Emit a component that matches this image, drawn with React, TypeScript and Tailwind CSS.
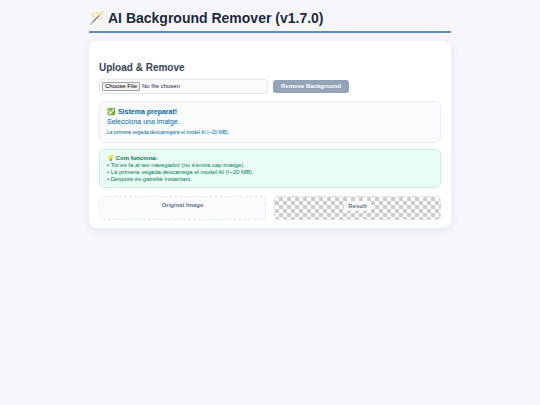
import { useState } from 'react'

const STEPS = [
  "Tot es fa al teu navegador (no s'envia cap imatge).",
  'La primera vegada descarrega el model AI (\\~20 MB).',
  'Després és gairebé instantani.',
]

export default function App() {
  const [file, setFile] = useState<File | null>(null)

  return (
    <div className="min-h-screen bg-[#f4f6fb] px-4 pt-2 font-['Liberation_Sans',Arial,sans-serif]">
      <main className="mx-auto max-w-[362px]">
        <h1 className="flex items-center gap-[3px] border-b-2 border-[#6488c8] pb-[3px] text-[14px] leading-5 font-bold text-[#1e293b]">
          <span className="text-[13px]">🪄</span>
          <span>AI Background Remover (v1.7.0)</span>
        </h1>

        <section className="mt-2 rounded-lg bg-white px-[10px] pt-5 pb-2 shadow-[0_2px_8px_rgba(30,41,59,0.08)]">
          <h2 className="text-[10px] leading-[14px] font-bold text-[#334155]">Upload &amp; Remove</h2>

          <div className="mt-1 flex items-center gap-[5px]">
            <input
              type="file"
              accept="image/*"
              aria-label="Image"
              onChange={e => setFile(e.target.files?.[0] ?? null)}
              className="h-[15px] w-[169px] rounded-[3px] border border-[#e2e8f0] bg-[#f8fafc] px-[2px] py-[2px] text-[6px] leading-[7px] text-[#1e293b] file:mr-[2px] file:rounded-[1px] file:border file:border-solid file:border-[#a3a3a3] file:bg-[#efefef] file:px-[2px] file:text-[6px] file:leading-[7px] file:text-black"
            />
            <button
              type="button"
              disabled={!file}
              className="h-[13px] rounded-[3px] bg-[#3b66b8] px-2 text-[6px] leading-[13px] font-bold text-white disabled:bg-[#94a3b8]"
            >
              Remove Background
            </button>
          </div>

          <div className="mt-[7px] rounded-[5px] border border-[#e9eef5] bg-[#f8fafc] px-[7px] py-[5px] text-[7px] leading-[10px] text-[#0369a1]">
            <p className="font-bold">✅ Sistema preparat!</p>
            <p>Selecciona una imatge.</p>
            <p className="text-[5px]">La primera vegada descarregarà el model AI (~20 MB).</p>
          </div>

          <div className="mt-[6px] rounded-[5px] border border-[#c6f1de] bg-[#e9fcf3] px-[7px] py-1 text-[6px] leading-[7px] text-[#047857]">
            <p className="leading-[8px] font-bold">💡 Com funciona:</p>
            {STEPS.map(s => <p key={s}>• {s}</p>)}
          </div>

          <div className="mt-2 grid grid-cols-2 gap-2 text-center text-[6px] leading-[10px] font-bold text-[#64748b]">
            <div className="h-6 rounded-[5px] border border-dashed border-[#e2e8f0] bg-[#f8fafc] pt-[3px]">
              Original Image
            </div>
            <div className="h-6 rounded-[5px] border border-dashed border-[#e2e8f0] bg-[conic-gradient(#ccc_25%,#fff_0_50%,#ccc_0_75%,#fff_0)] bg-[length:8px_8px] pt-1">
              <span className="inline-block rounded-[2px] bg-white/80 px-1">Result</span>
            </div>
          </div>
        </section>
      </main>
    </div>
  )
}
